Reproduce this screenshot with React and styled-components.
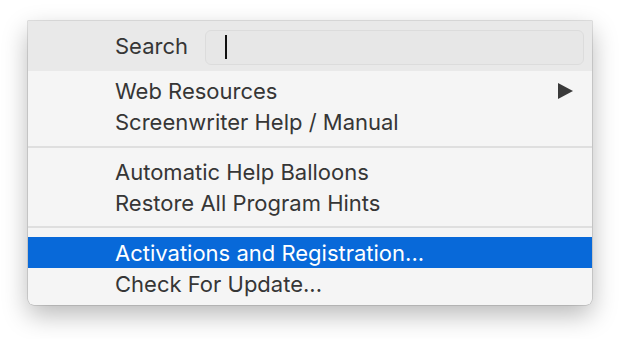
import React from "react"
import styled, { createGlobalStyle } from "styled-components"

const Global = createGlobalStyle`
  html, body {
    margin: 0;
    padding: 0;
    background: #ffffff;
  }
  body {
    font-family: Inter, "Liberation Sans", sans-serif;
  }
`

const Page = styled.div`
  width: 620px;
  height: 339px;
  padding: 21px 28px 0 28px;
  box-sizing: border-box;
`

const Menu = styled.div`
  width: 564px;
  background: #f5f5f5;
  border-radius: 0 0 6px 6px;
  box-shadow: 0 0 0 0.5px rgba(0, 0, 0, 0.22), 0 10px 26px rgba(0, 0, 0, 0.28);
  padding-bottom: 6px;
  overflow: hidden;
`

const SearchRow = styled.div`
  height: 50px;
  background: #e9e9e9;
  display: flex;
  align-items: center;
  padding: 0 8px 0 87px;
  margin-bottom: 4px;
`

const Label = styled.span`
  font-size: 22px;
  color: #363636;
  margin-right: 17px;
`

const SearchField = styled.div`
  flex: 1;
  height: 33px;
  margin-top: 2px;
  background: #e7e7e7;
  border: 1px solid #dcdcdc;
  border-radius: 6px;
  display: flex;
  align-items: center;
  padding-left: 19px;
`

const Caret = styled.div`
  width: 2px;
  height: 24px;
  background: #111;
`

const Item = styled.div`
  height: 31px;
  display: flex;
  align-items: center;
  justify-content: space-between;
  padding: 0 19px 0 87px;
  font-size: 22px;
  color: ${p => (p.active ? "#ffffff" : "#363636")};
  background: ${p => (p.active ? "#0869d9" : "transparent")};
`

const Separator = styled.div`
  height: 2px;
  background: #dfdfdf;
  margin: ${p => p.m || "9px 0 9px"};
`

const Arrow = styled.svg`
  width: 15px;
  height: 16px;
`

export default function App() {
  return (
    <>
      <Global />
      <Page>
        <Menu>
          <SearchRow>
            <Label>Search</Label>
            <SearchField>
              <Caret />
            </SearchField>
          </SearchRow>
          <Item>
            Web Resources
            <Arrow viewBox="0 0 15 16">
              <path d="M0 0 L15 8 L0 16 Z" fill="#3a3a3a" />
            </Arrow>
          </Item>
          <Item>Screenwriter Help / Manual</Item>
          <Separator m="9px 0 8px" />
          <Item>Automatic Help Balloons</Item>
          <Item>Restore All Program Hints</Item>
          <Separator m="8px 0 9px" />
          <Item active>Activations and Registration...</Item>
          <Item>Check For Update...</Item>
        </Menu>
      </Page>
    </>
  )
}
